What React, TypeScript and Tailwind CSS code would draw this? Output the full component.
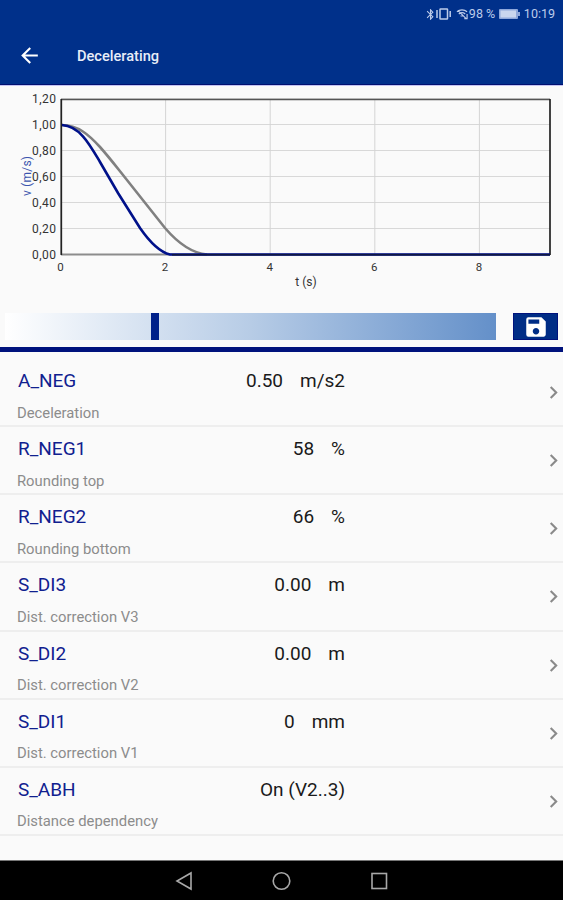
import { MdArrowBack, MdBluetooth, MdChevronRight, MdSave } from "react-icons/md";

const params = [
  { name: "A_NEG", label: "Deceleration", value: "0.50", unit: "m/s2" },
  { name: "R_NEG1", label: "Rounding top", value: "58", unit: "%" },
  { name: "R_NEG2", label: "Rounding bottom", value: "66", unit: "%" },
  { name: "S_DI3", label: "Dist. correction V3", value: "0.00", unit: "m" },
  { name: "S_DI2", label: "Dist. correction V2", value: "0.00", unit: "m" },
  { name: "S_DI1", label: "Dist. correction V1", value: "0", unit: "mm" },
  { name: "S_ABH", label: "Distance dependency", value: "On (V2..3)", unit: "" },
];

const yTicks = ["1,20", "1,00", "0,80", "0,60", "0,40", "0,20", "0,00"];
const xTicks = [0, 2, 4, 6, 8];

const StatusBar = () => (
  <div className="flex h-7 items-center justify-end pr-2 text-[12.5px] text-[#bccbea]">
    <MdBluetooth size={13} className="-mr-px" />
    <svg width="15" height="12" viewBox="0 0 15 12" fill="none" stroke="currentColor" strokeWidth="1.5" className="mr-[5px]">
      <rect x="4" y="1" width="7.5" height="10" rx="0.5" />
      <path d="M1 2V10M14.2 3V9" />
    </svg>
    <svg width="12" height="12" viewBox="0 0 13 12" fill="none" stroke="currentColor" strokeWidth="1.3">
      <path d="M1 3.5C4 1 9 1 12 3.5M3 6c2-1.6 5-1.6 7 0M5 8.5c1-.8 2-.8 3 0M2 2l9 9M12 6v5H9" />
    </svg>
    <span className="ml-px w-[28px] whitespace-nowrap">98 %</span>
    <svg width="21" height="10" viewBox="0 0 21 10" className="mr-1 ml-0.5">
      <rect x="0" y="0" width="19" height="10" rx="1" fill="#8fa8db" />
      <rect x="1.5" y="1.5" width="15.5" height="7" fill="#c9d6ef" />
      <rect x="19" y="3" width="2" height="4" fill="#8fa8db" />
    </svg>
    <span>10:19</span>
  </div>
);

const Header = () => (
  <header className="h-[85px] border-b border-[#001070] bg-[#00308a]">
    <StatusBar />
    <div className="flex h-14 items-center pl-[17px]">
      <MdArrowBack size={25} className="-mt-px text-white" />
      <h1 className="mt-0.5 ml-[35px] text-[14.6px] font-medium text-[#e8edf8]">Decelerating</h1>
    </div>
  </header>
);

const Chart = () => (
  <svg width="563" height="215" viewBox="0 85 563 215" className="block" fontSize="12" fill="#333">
    <path d="M0 85.5H563" stroke="#c4c4f2" />
    {yTicks.map((tick, i) => (
      <g key={tick}>
        <path d={`M61 ${98.5 + i * 26}H550`} stroke="#d8d8d8" />
        <text x="56" y={103 + i * 26} textAnchor="end" textLength="24">{tick}</text>
      </g>
    ))}
    {xTicks.map((tick) => (
      <g key={tick}>
        <path d={`M${61 + tick * 52.3} 99V254`} stroke="#d4d4d4" />
        <text x={60.5 + tick * 52.3} y="271" textAnchor="middle" fontSize="11.5">{tick}</text>
      </g>
    ))}
    <path d="M61 99.5H550" stroke="#555" strokeWidth="1.5" />
    <path d="M61 254.5H550" stroke="#8c8c8c" strokeWidth="2" />
    <path d="M61.3 99V255M550 99V255" stroke="#222" strokeWidth="1.7" />
    <path
      d="M62 125C78 125 89 135 100 147C108 156 115 165 123 175L165 228C177 242 190 253 207 254.5"
      fill="none"
      stroke="#808080"
      strokeWidth="2.6"
    />
    <path
      d="M62 125C80 126 90 145 100 162L118 193L140 228C149 241 159 252 170 254.5H550"
      fill="none"
      stroke="#00118a"
      strokeWidth="2.6"
    />
    <path d="M172 254.7H550" stroke="#101840" strokeWidth="1.5" />
    <text x="306" y="286" textAnchor="middle">t (s)</text>
    <text transform="translate(31 176) rotate(-90)" textAnchor="middle" textLength="40" fill="#3b55ae">v (m/s)</text>
  </svg>
);

const Slider = () => (
  <div className="flex h-[52px] shrink-0 items-start border-b-[5px] border-[#00127c] px-[5px] pt-[13px]">
    <div className="flex h-[27px] w-[491px] bg-linear-to-r from-white via-[#b7cce6] via-50% to-[#6490c9] pl-[146px]">
      <div className="h-full w-2 bg-[#00218a]" />
    </div>
    <button className="ml-auto flex h-[27px] w-[45px] items-center justify-center border border-[#00127c] bg-[#002d86]">
      <MdSave size={26} className="text-white" />
    </button>
  </div>
);

const ParamList = () => (
  <ul className="pt-[7px]">
    {params.map((param) => (
      <li key={param.name} className="flex h-[68.15px] border-b-2 border-[#eeeeee] pl-[17px]">
        <div className="w-[188px] pt-[10px]">
          <div className="pl-px text-[19px] leading-6 text-[#10208f]">{param.name}</div>
          <div className="mt-[9.5px] text-[14.8px] leading-5 text-[#8c8c8c]">{param.label}</div>
        </div>
        <div className="flex h-6 w-[140px] justify-end gap-[17px] pt-[10px] text-[19px] leading-6 whitespace-nowrap text-[#1a1a1a]">
          <span>{param.value}</span>
          {param.unit && <span>{param.unit}</span>}
        </div>
        <MdChevronRight size={25} className="mt-[21px] mr-[-3px] ml-auto text-[#8a8a8a]" />
      </li>
    ))}
  </ul>
);

const NavBar = () => (
  <nav className="mt-auto flex h-10 items-center border-t border-[#777] bg-black pl-[173px]">
    <svg width="220" height="22" viewBox="0 0 220 22" fill="none" stroke="#a8a8a8" strokeWidth="1.6">
      <path d="M18 3V19L4 11Z" />
      <circle cx="108.5" cy="11" r="8.3" />
      <rect x="199" y="3.5" width="14.5" height="15" />
    </svg>
  </nav>
);

export default function App() {
  return (
    <div className="flex h-[900px] w-[563px] flex-col overflow-hidden bg-[#fafafa] font-['Roboto',sans-serif]">
      <Header />
      <Chart />
      <Slider />
      <ParamList />
      <NavBar />
    </div>
  );
}
